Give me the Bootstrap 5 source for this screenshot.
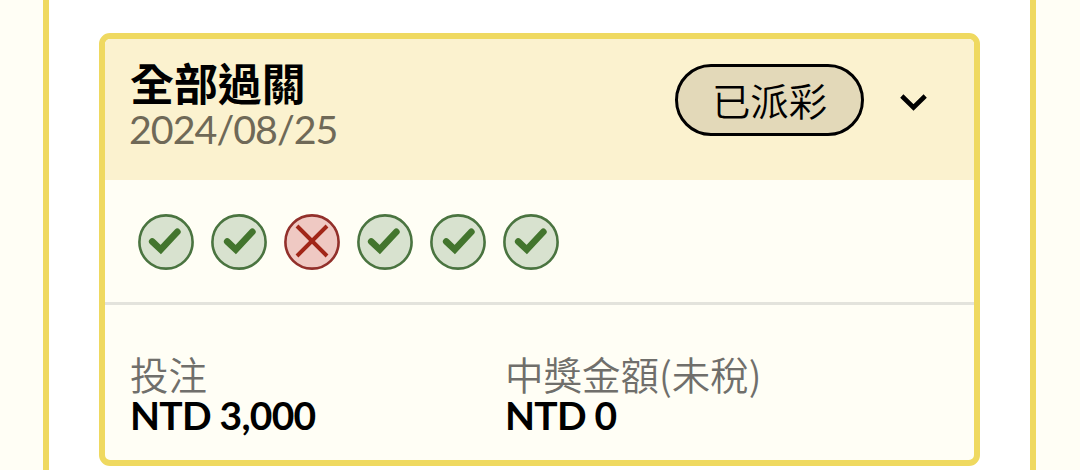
<!DOCTYPE html>
<html lang="zh-Hant">
<head>
  <meta charset="UTF-8" />
  <meta name="viewport" content="width=device-width, initial-scale=1.0" />
  <title>全部過關</title>
  <link href="https://cdn.jsdelivr.net/npm/bootstrap@5.3.3/dist/css/bootstrap.min.css" rel="stylesheet" />
  <style>
    body {
      background-color: #fffef5;
      color: #000;
      font-family: Lato, "Noto Sans CJK TC", sans-serif;
      font-size: 38px;
      line-height: 42px;
      overflow: hidden;
    }
    .bet-panel {
      width: 993px;
      height: 470px;
      margin-left: 43px;
      padding: 33px 50px 0;
      background-color: #fff;
      border: solid #efd960;
      border-width: 0 6px;
    }
    .bet-card {
      height: 433px;
      color: #000;
      background-color: #fffef5;
      border: 6px solid #efd960;
      border-radius: 11px;
      overflow: hidden;
    }
    .bet-header {
      height: 141px;
      padding: 25px 46px 0 25px;
      background-color: #fbf2cf;
      border: 0;
    }
    .bet-title {
      margin-top: -2px;
      font-size: 43.9px;
      line-height: 44px;
    }
    .bet-date {
      margin: 2px 0 0 -1px;
      font-size: 39.4px;
      line-height: 42px;
      letter-spacing: -1px;
      color: #6f6957;
    }
    .bet-status {
      width: 189px;
      height: 72px;
      padding-top: 1px;
      border: 3px solid #000;
      background-color: #e3d9b9;
      font-size: 38.4px;
      font-weight: 350;
    }
    .bet-legs {
      height: 125px;
      padding: 2px 0 0 33px;
      gap: 17px;
      border-bottom: 3px solid #e3e3dc;
    }
    .bet-amounts {
      padding: 47px 94px 0 25px;
    }
    .bet-label {
      font-family: "Noto Sans CJK TC", sans-serif;
      font-size: 38.5px;
      color: #706f6b;
      font-weight: 350;
    }
    .bet-value {
      font-size: 39px;
      font-weight: 700;
      letter-spacing: -0.75px;
    }
  </style>
</head>
<body>
  <svg class="d-none">
    <symbol id="check" viewBox="0 0 56 56">
      <path d="M14.2 27.5 22.8 35.6 39.4 17.8" fill="none" stroke="#43752e" stroke-width="6.6" stroke-linecap="round" />
    </symbol>
  </svg>

  <div class="bet-panel">
    <div class="card bet-card">
      <div class="card-header bet-header d-flex justify-content-between align-items-start">
        <div>
          <div class="bet-title fw-bold">全部過關</div>
          <div class="bet-date">2024/08/25</div>
        </div>
        <div class="d-flex align-items-center">
          <span class="bet-status rounded-pill d-flex justify-content-center align-items-center">已派彩</span>
          <svg class="ms-4" width="40" height="40" viewBox="0 0 40 40">
            <path d="M13.8 16 25.5 27.5 37.2 16" fill="none" stroke="#000" stroke-width="4.6" />
          </svg>
        </div>
      </div>

      <div class="bet-legs d-flex align-items-center">
        <svg width="56" height="56" viewBox="0 0 56 56">
          <circle cx="28" cy="28" r="26.6" fill="#d8e2cf" stroke="#4a7440" stroke-width="2.6" />
          <use href="#check" />
        </svg>
        <svg width="56" height="56" viewBox="0 0 56 56">
          <circle cx="28" cy="28" r="26.6" fill="#d8e2cf" stroke="#4a7440" stroke-width="2.6" />
          <use href="#check" x="2" />
        </svg>
        <svg width="56" height="56" viewBox="0 0 56 56">
          <circle cx="28" cy="28" r="26.6" fill="#efc9c3" stroke="#92302b" stroke-width="2.6" />
          <path d="M13 12 43 42M43 12 13 42" stroke="#a12618" stroke-width="4" />
        </svg>
        <svg width="56" height="56" viewBox="0 0 56 56">
          <circle cx="28" cy="28" r="26.6" fill="#d8e2cf" stroke="#4a7440" stroke-width="2.6" />
          <use href="#check" />
        </svg>
        <svg width="56" height="56" viewBox="0 0 56 56">
          <circle cx="28" cy="28" r="26.6" fill="#d8e2cf" stroke="#4a7440" stroke-width="2.6" />
          <use href="#check" x="2" />
        </svg>
        <svg width="56" height="56" viewBox="0 0 56 56">
          <circle cx="28" cy="28" r="26.6" fill="#d8e2cf" stroke="#4a7440" stroke-width="2.6" />
          <use href="#check" x="1" />
        </svg>
      </div>

      <div class="bet-amounts">
        <div class="row gx-0">
          <div class="col-6">
            <div class="bet-label">投注</div>
            <div class="bet-value">NTD 3,000</div>
          </div>
          <div class="col-6">
            <div class="bet-label">中獎金額(未稅)</div>
            <div class="bet-value">NTD 0</div>
          </div>
        </div>
      </div>
    </div>
  </div>

  <script src="https://cdn.jsdelivr.net/npm/bootstrap@5.3.3/dist/js/bootstrap.bundle.min.js"></script>
</body>
</html>
